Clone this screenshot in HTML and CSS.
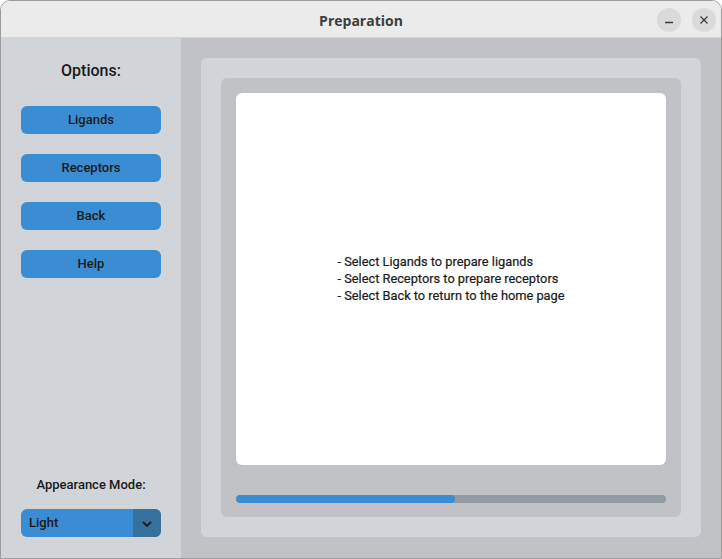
FILE: index.html
```html
<!DOCTYPE html>
<html>
<head>
<meta charset="utf-8">
<link rel="stylesheet" href="styles.css">
</head>
<body>
<div class="window">
  <div class="titlebar">
    <span class="title">Preparation</span>
    <div class="controls">
      <span class="ctl"><svg width="24" height="24" viewBox="0 0 24 24"><path d="M8 14.5h8" stroke="#3c3c3c" stroke-width="1.3"/></svg></span>
      <span class="ctl"><svg width="24" height="24" viewBox="0 0 24 24"><path d="M8.5 8.5l7 7M15.5 8.5l-7 7" stroke="#3c3c3c" stroke-width="1.3"/></svg></span>
    </div>
  </div>
  <div class="body">
    <aside class="sidebar">
      <div class="heading">Options:</div>
      <button class="btn">Ligands</button>
      <button class="btn">Receptors</button>
      <button class="btn">Back</button>
      <button class="btn">Help</button>
      <div class="spacer"></div>
      <div class="mode-label">Appearance Mode:</div>
      <div class="select">
        <span class="select-value">Light</span>
        <span class="select-arrow"><svg width="12" height="8" viewBox="0 0 12 8"><path d="M2 2l4 4 4-4" fill="none" stroke="#1a1a1a" stroke-width="1.8"/></svg></span>
      </div>
    </aside>
    <main class="main">
      <div class="outer">
        <div class="inner">
          <div class="textbox">
            <div class="message">
              <div>- Select Ligands to prepare ligands</div>
              <div>- Select Receptors to prepare receptors</div>
              <div>- Select Back to return to the home page</div>
            </div>
          </div>
          <div class="progress"><div class="progress-fill" style="width:51%"></div></div>
        </div>
      </div>
    </main>
  </div>
</div>
</body>
</html>
```

FILE: styles.css
```css
html, body {
  margin: 0;
  padding: 0;
  background: #ffffff;
}
.window {
  width: 722px;
  height: 559px;
  box-sizing: border-box;
  border: 1px solid #9c9c9c;
  border-radius: 10px 10px 0 0;
  overflow: hidden;
  display: flex;
  flex-direction: column;
  font-family: Roboto, "Liberation Sans", sans-serif;
  color: #1a1a1a;
}
.titlebar {
  height: 36px;
  flex: none;
  background: #ebebeb;
  border-bottom: 1px solid #d4d4d4;
  display: flex;
  align-items: center;
  justify-content: center;
  position: relative;
}
.title {
  font-family: "Open Sans", "DejaVu Sans", sans-serif;
  font-weight: bold;
  font-size: 14px;
  color: #3d3d3d;
  margin-top: 2px;
}
.controls {
  position: absolute;
  right: 5px;
  top: 7px;
  display: flex;
  gap: 11px;
}
.ctl {
  width: 24px;
  height: 24px;
  border-radius: 50%;
  background: #dadada;
  display: block;
}
.ctl svg { display: block; }
.body {
  flex: 1;
  display: flex;
  min-height: 0;
}
.sidebar {
  width: 180px;
  flex: none;
  background: #d1d4d8;
  box-sizing: border-box;
  padding: 20px 20px 21px 20px;
  display: flex;
  flex-direction: column;
  align-items: center;
}
.heading {
  font-size: 16px;
  font-weight: 500;
  height: 24px;
  line-height: 24px;
  margin-top: 1px;
  margin-bottom: 23px;
}
.btn {
  width: 140px;
  height: 28px;
  border: none;
  border-radius: 6px;
  background: #3a8dd2;
  color: #1a1a1a;
  font-family: Roboto, "Liberation Sans", sans-serif;
  font-size: 13px;
  font-weight: 500;
  margin-bottom: 20px;
  padding: 0 0 2px 0;
}
.spacer { flex: 1; }
.mode-label {
  font-size: 13px;
  font-weight: 500;
  height: 18px;
  line-height: 18px;
  margin-bottom: 15px;
}
.select {
  width: 140px;
  height: 28px;
  border-radius: 6px;
  overflow: hidden;
  display: flex;
  background: #3a8dd2;
}
.select-value {
  flex: 1;
  font-size: 13px;
  font-weight: 500;
  line-height: 28px;
  padding-left: 8px;
}
.select-arrow {
  width: 28px;
  background: #36709f;
  display: flex;
  align-items: center;
  justify-content: center;
}
.select-arrow svg { display: block; margin-top: 1px; }
.main {
  flex: 1;
  background: #c1c2c5;
  padding: 20px 20px 21px 20px;
  display: flex;
}
.outer {
  flex: 1;
  background: #d1d4d8;
  border-radius: 6px;
  padding: 20px;
  display: flex;
}
.inner {
  flex: 1;
  background: #c1c2c5;
  border-radius: 6px;
  padding: 15px 15px 14px 15px;
  display: flex;
  flex-direction: column;
}
.textbox {
  flex: 1;
  background: #ffffff;
  border-radius: 6px;
  display: flex;
  align-items: center;
  justify-content: center;
}
.message {
  font-size: 12.8px;
  font-weight: 400;
  line-height: 17px;
  margin-top: -1px;
  -webkit-text-stroke: 0.2px #1a1a1a;
}
.progress {
  margin-top: 30px;
  height: 8px;
  border-radius: 4px;
  background: #939ba2;
  overflow: hidden;
}
.progress-fill {
  height: 100%;
  background: #3a8dd2;
  border-radius: 4px;
}
```
